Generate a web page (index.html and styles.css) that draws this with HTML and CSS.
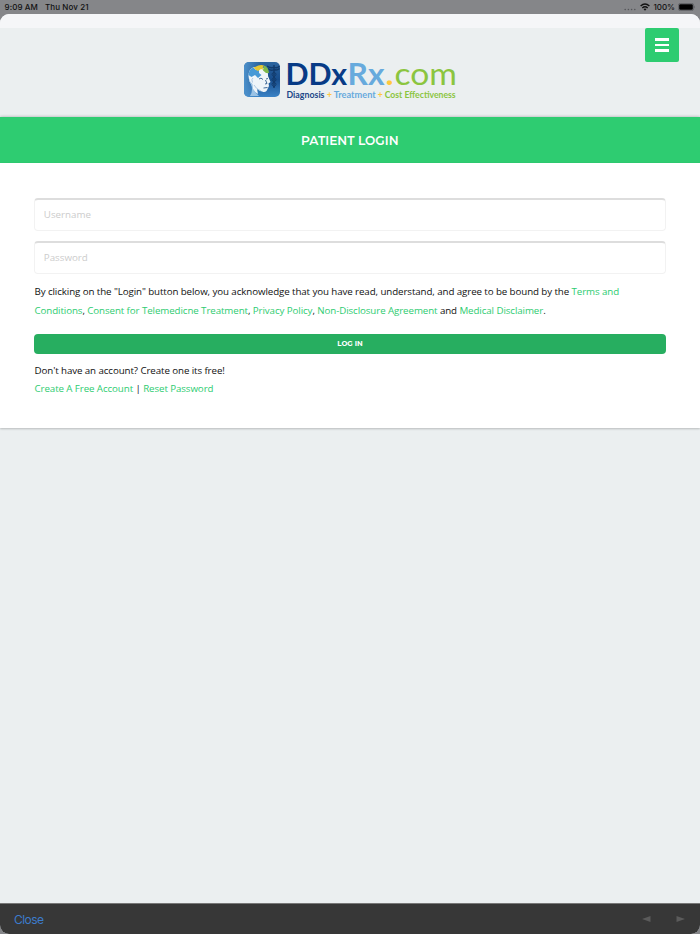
FILE: index.html
```html
<!DOCTYPE html>
<html lang="en">
<head>
<meta charset="utf-8">
<title>Patient Login</title>
<link rel="stylesheet" href="styles.css">
</head>
<body>
<div class="status">
  <div class="clock"><span>9:09 AM</span><span>Thu Nov 21</span></div>
  <div class="indicators">
    <svg class="dots" width="12" height="3" viewBox="0 0 12 3"><g fill="#55565a"><circle cx="1.2" cy="1.5" r=".8"/><circle cx="4.4" cy="1.5" r=".8"/><circle cx="7.6" cy="1.5" r=".8"/><circle cx="10.8" cy="1.5" r=".8"/></g></svg>
    <svg class="wifi" width="10" height="8" viewBox="0 0 10 8"><g fill="none" stroke="#111" stroke-width="1.4"><path d="M.6 3Q5-1 9.4 3"/><path d="M2.3 4.9Q5 2.5 7.7 4.9"/></g><path d="M3.5 6.1Q5 4.9 6.5 6.1L5 7.7Z" fill="#111"/></svg>
    <span>100%</span>
    <svg class="battery" width="18" height="8" viewBox="0 0 18 8"><rect x=".4" y=".4" width="15.2" height="7.2" rx="2" fill="none" stroke="#55565a" stroke-width=".7"/><rect x="1.2" y="1.2" width="13.6" height="5.6" rx="1.2" fill="#000"/><path d="M16.4 2.8Q17.8 4 16.4 5.2Z" fill="#55565a"/></svg>
  </div>
</div>
<div class="sheet">
  <header class="header">
    <svg class="logo" width="216" height="44" viewBox="0 0 216 44" role="img" aria-label="DDxRx.com">
      <defs>
        <linearGradient id="tile" x1="0" y1="0" x2="0" y2="1"><stop offset="0" stop-color="#2c659f"/><stop offset=".5" stop-color="#174d8c"/><stop offset="1" stop-color="#3b83c6"/></linearGradient>
        <linearGradient id="edge" x1="0" y1="0" x2="1" y2="0"><stop offset="0" stop-color="#4c91cb"/><stop offset=".45" stop-color="#4c91cb" stop-opacity="0"/></linearGradient>
      </defs>
      <rect x="2" y="4" width="36" height="35" rx="5" fill="url(#tile)"/>
      <rect x="2" y="4" width="36" height="35" rx="5" fill="url(#edge)"/>
      <g fill="none" stroke="#123b6c" stroke-width="1"><path d="M32 7V30M25 8Q29 11 32 9Q35 11 37.5 8M26 10.5Q29 13.5 32 11.5Q35 13 37.5 10.5" stroke-width="1.4"/><path d="M32 14Q28 16 32 19T32 24T32 29M32 14Q36 16 32 19T32 24T32 29"/></g>
      <path d="M6.5 18Q6.5 11 12 9L24 10Q26.5 14 26 18L28.5 24L26.5 25.5L27 28L25.5 31Q24.5 34.5 21.5 34Q17 33 15 31L16 36L13 34Q10 31 9.5 27Q6.5 23 6.5 18Z" fill="#eff5f9"/>
      <path d="M6.5 18Q7 23 10.5 26L11 31L15 36L17 38H8Q11 34 9.5 27Q6.5 23 6.5 18Z" fill="#9bc3e5"/>
      <path d="M17 21Q19 19 21 21.5M24 21L26 20.5M23.5 22L25 25.5L23 26M21.5 30L25.5 29.5" fill="none" stroke="#2f5b8d" stroke-width=".9"/>
      <path d="M11 20Q9 21 10.5 24.5M12 27Q14 31 19 33" fill="none" stroke="#9cbddc" stroke-width=".8"/>
      <path d="M6.5 17Q7 11 11.5 9.5L14 12L17 12L17 15L19.5 17L16 20L13 17L9.5 19Z" fill="#4799d6"/>
      <path d="M13 9Q18 6 22 7.5L20.5 10L22 12L19 11L16 13L14 12L11.5 9.5Z" fill="#e5c733"/>
      <path d="M22 7.5Q26.5 9 27 15L24 15L21 12.5Z" fill="#7eb84c"/>
      <g class="wordmark">
        <text x="43.5" y="27" textLength="61.5" lengthAdjust="spacingAndGlyphs" fill="#073b86" font-weight="700">DDx</text>
        <text x="105.5" y="27" textLength="37" lengthAdjust="spacingAndGlyphs" fill="#67aadd" font-weight="700">Rx</text>
        <text x="143.5" y="27" textLength="8" lengthAdjust="spacingAndGlyphs" fill="#ffc83d" font-weight="700">.</text>
        <text x="152.5" y="27" textLength="62.5" lengthAdjust="spacingAndGlyphs" fill="#8bc53f">com</text>
      </g>
      <g class="tagline">
        <text x="44.5" y="39.6" textLength="38" lengthAdjust="spacingAndGlyphs" fill="#1c4788">Diagnosis</text>
        <text x="85" y="39.6" textLength="5" lengthAdjust="spacingAndGlyphs" fill="#ffc83d">+</text>
        <text x="91.7" y="39.6" textLength="42" lengthAdjust="spacingAndGlyphs" fill="#67aadd">Treatment</text>
        <text x="135.8" y="39.6" textLength="5" lengthAdjust="spacingAndGlyphs" fill="#ffc83d">+</text>
        <text x="142.7" y="39.6" textLength="71" lengthAdjust="spacingAndGlyphs" fill="#8bc53f">Cost Effectiveness</text>
      </g>
    </svg>
    <button class="menu" aria-label="Menu"><i></i><i></i><i></i></button>
  </header>
  <h1 class="title"><svg width="100" height="16"><text x="1" y="12.5" textLength="97.5" lengthAdjust="spacingAndGlyphs">PATIENT LOGIN</text></svg></h1>
  <main class="card">
    <input class="field" type="text" placeholder="Username">
    <input class="field" type="password" placeholder="Password">
    <p class="terms">By clicking on the "Login" button below, you acknowledge that you have read, understand, and agree to be bound by the <a>Terms and<br>Conditions</a>, <a>Consent for Telemedicne Treatment</a>, <a>Privacy Policy</a>, <a>Non-Disclosure Agreement</a> and <a>Medical Disclaimer</a>.</p>
    <button class="login">LOG IN</button>
    <p class="account">Don't have an account? Create one its free!<br><a>Create A Free Account</a> | <a>Reset Password</a></p>
  </main>
  <footer class="toolbar">
    <span class="close">Close</span>
    <svg width="43" height="6" viewBox="0 0 43 6" fill="#5b5b5b"><path d="M0 3L8.5 0V6Z"/><path d="M43 3L34.5 0V6Z"/></svg>
  </footer>
</div>
</body>
</html>
```

FILE: styles.css
```css
* { box-sizing: border-box; }
body {
  margin: 0;
  height: 934px;
  display: flex;
  flex-direction: column;
  overflow: hidden;
  background: #858689;
  color: #111;
  font-family: "Open Sans", sans-serif;
}
.status {
  height: 14px;
  display: flex;
  justify-content: space-between;
  padding: 0 4px 0 4.5px;
  font: 500 8px/14px Inter, sans-serif;
}
.clock { display: flex; gap: 7px; letter-spacing: .1px; }
.indicators { display: flex; align-items: center; }
.dots { margin: 5px 4px 0 0; }
.wifi { margin-right: 3px; }
.battery { margin-left: 3px; }
.sheet {
  flex: 1;
  display: flex;
  flex-direction: column;
  overflow: hidden;
  border-radius: 9px;
  background: #ebeff0;
}
.header {
  position: relative;
  height: 103px;
  padding-top: 30px;
  border-top: 14px solid #f5f6f8;
  display: flex;
  justify-content: center;
  align-items: flex-start;
}
.logo { display: block; overflow: visible; }
.wordmark { font: 31px Lato, sans-serif; }
.tagline { font: 700 8.6px Lato, sans-serif; }
.menu {
  position: absolute;
  top: 0;
  right: 21px;
  width: 34px;
  height: 34px;
  padding: 0;
  border: 0;
  border-radius: 2px;
  background: #2ecc71;
  display: flex;
  flex-direction: column;
  align-items: center;
  justify-content: center;
  gap: 3px;
}
.menu i { width: 14px; height: 2.6px; background: #fff; }
.title {
  height: 46px;
  margin: 0;
  display: flex;
  align-items: center;
  justify-content: center;
  background: #2ecc71;
  box-shadow: 0 0 3px rgba(0, 0, 0, .3);
}
.title text { font: 600 12px Montserrat, Inter, sans-serif; fill: #fff; }
.card {
  position: relative;
  height: 264.5px;
  padding: 35px 34.5px 0;
  background: #fff;
  box-shadow: 0 1px 2px rgba(0, 0, 0, .22);
}
.field {
  display: block;
  width: 631.4px;
  height: 33px;
  margin: 0 0 9.5px -.2px;
  padding: 0 8.5px 1px;
  border: 1px solid #f2f2f2;
  border-top: 2px solid #ddd;
  border-radius: 4px;
  background: #fff;
  font: 9.75px "Open Sans", sans-serif;
}
.field::placeholder { color: #ccc; opacity: 1; }
.terms {
  margin: -1px 0 0;
  font-size: 9.75px;
  letter-spacing: -.095px;
  line-height: 19px;
  white-space: nowrap;
}
a { color: #2ecc71; }
.login {
  display: block;
  width: 631.4px;
  height: 20.5px;
  margin: 13.5px 0 7.5px -.2px;
  padding: 0;
  border: 0;
  border-radius: 4px;
  background: #27ae60;
  color: #fff;
  font: 700 7px/19px Montserrat, Inter, sans-serif;
}
.account {
  margin: 0;
  font-size: 9.75px;
  letter-spacing: -.095px;
  line-height: 18px;
}
.toolbar {
  height: 31px;
  margin-top: auto;
  padding: 0 15px 0 14px;
  display: flex;
  align-items: center;
  justify-content: space-between;
  border-top: 1px solid #777;
  background: #373737;
  color: #3c7ccc;
  font: 12px Inter, sans-serif;
}
.close { letter-spacing: -.55px; }
```
